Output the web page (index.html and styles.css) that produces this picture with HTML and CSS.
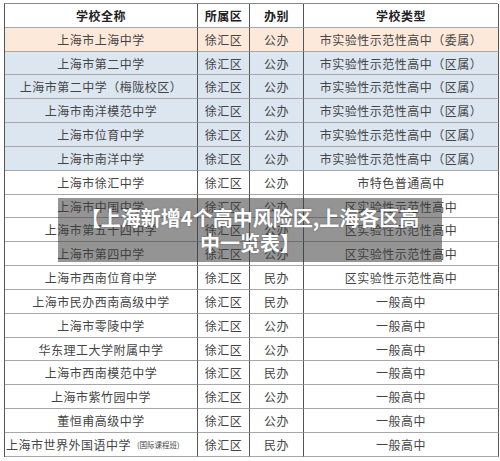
FILE: index.html
```html
<!DOCTYPE html>
<html lang="zh">
<head>
<meta charset="utf-8">
<link rel="stylesheet" href="styles.css">
</head>
<body>
<div class="page">
  <div class="sheet">
    <div class="c h">学校全称</div><div class="c h">所属区</div><div class="c h">办别</div><div class="c h">学校类型</div>

    <div class="c peach">上海市上海中学</div><div class="c peach">徐汇区</div><div class="c peach">公办</div><div class="c peach">市实验性示范性高中（委属）</div>

    <div class="c blue">上海市第二中学</div><div class="c blue">徐汇区</div><div class="c blue">公办</div><div class="c blue">市实验性示范性高中（区属）</div>
    <div class="c blue">上海市第二中学（梅陇校区）</div><div class="c blue">徐汇区</div><div class="c blue">公办</div><div class="c blue">市实验性示范性高中（区属）</div>
    <div class="c blue">上海市南洋模范中学</div><div class="c blue">徐汇区</div><div class="c blue">公办</div><div class="c blue">市实验性示范性高中（区属）</div>
    <div class="c blue">上海市位育中学</div><div class="c blue">徐汇区</div><div class="c blue">公办</div><div class="c blue">市实验性示范性高中（区属）</div>
    <div class="c blue">上海市南洋中学</div><div class="c blue">徐汇区</div><div class="c blue">公办</div><div class="c blue">市实验性示范性高中（区属）</div>

    <div class="c">上海市徐汇中学</div><div class="c">徐汇区</div><div class="c">公办</div><div class="c">市特色普通高中</div>
    <div class="c">上海市中国中学</div><div class="c">徐汇区</div><div class="c">公办</div><div class="c">区实验性示范性高中</div>
    <div class="c">上海市第五十四中学</div><div class="c">徐汇区</div><div class="c">公办</div><div class="c">区实验性示范性高中</div>
    <div class="c">上海市第四中学</div><div class="c">徐汇区</div><div class="c">公办</div><div class="c">区实验性示范性高中</div>
    <div class="c">上海市西南位育中学</div><div class="c">徐汇区</div><div class="c">民办</div><div class="c">区实验性示范性高中</div>
    <div class="c">上海市民办西南高级中学</div><div class="c">徐汇区</div><div class="c">民办</div><div class="c">一般高中</div>
    <div class="c">上海市零陵中学</div><div class="c">徐汇区</div><div class="c">公办</div><div class="c">一般高中</div>
    <div class="c">华东理工大学附属中学</div><div class="c">徐汇区</div><div class="c">公办</div><div class="c">一般高中</div>
    <div class="c">上海市西南模范中学</div><div class="c">徐汇区</div><div class="c">民办</div><div class="c">一般高中</div>
    <div class="c">上海市紫竹园中学</div><div class="c">徐汇区</div><div class="c">公办</div><div class="c">一般高中</div>
    <div class="c">董恒甫高级中学</div><div class="c">徐汇区</div><div class="c">公办</div><div class="c">一般高中</div>
    <div class="c left">上海市世界外国语中学<span class="small">(国际课程班)</span></div><div class="c">徐汇区</div><div class="c">民办</div><div class="c">一般高中</div>
  </div>
  <div class="caption">【上海新增4个高中风险区,上海各区高中一览表】</div>
</div>
</body>
</html>
```

FILE: styles.css
```css
html, body {
  margin: 0;
  padding: 0;
  background: #ffffff;
}
.page {
  position: relative;
  width: 500px;
  height: 461px;
  overflow: hidden;
  padding: 3px 0 0 4px;
  box-sizing: border-box;
  font-family: "Noto Sans CJK SC", "Noto Sans", sans-serif;
}
.sheet {
  display: grid;
  grid-template-columns: 193px 52px 54px 195px;
  grid-template-rows: repeat(19, 23.84px);
  border-top: 1px solid #8a8a8a;
  border-left: 1px solid #555;
  width: 494px;
  box-sizing: border-box;
}
.c {
  display: flex;
  align-items: center;
  justify-content: center;
  border-right: 1px solid #555;
  border-bottom: 1px solid #a8a8a8;
  box-sizing: border-box;
  font-size: 12px;
  letter-spacing: 0.5px;
  color: #444;
  white-space: nowrap;
  overflow: hidden;
  background: #ffffff;
}
.h {
  font-weight: bold;
  color: #222;
}
.peach {
  background: #fde9d9;
}
.blue {
  background: #dce6f1;
}
.left {
  justify-content: flex-start;
  padding-left: 1px;
}
.small {
  font-size: 7.5px;
  letter-spacing: 0;
  margin-left: 6px;
}
.caption {
  position: absolute;
  left: 58px;
  top: 198px;
  width: 384px;
  height: 64px;
  box-sizing: border-box;
  padding: 0 15px;
  display: flex;
  align-items: center;
  justify-content: center;
  text-align: center;
  background: rgba(60, 60, 60, 0.55);
  color: #ffffff;
  font-weight: bold;
  font-size: 20px;
  line-height: 25px;
  text-shadow: 0 0 2px rgba(0, 0, 0, 0.3);
}
```
